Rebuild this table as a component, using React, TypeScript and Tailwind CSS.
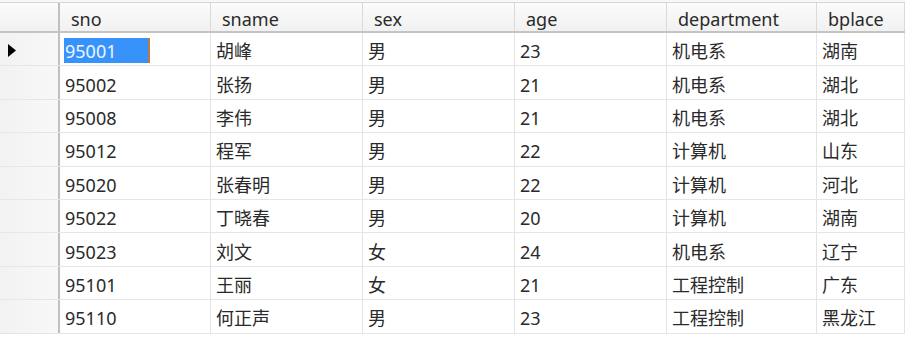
const columns = ["sno", "sname", "sex", "age", "department", "bplace"]
const widths = ["w-[151px]", "w-[152px]", "w-[152px]", "w-[152px]", "w-[150px]", "flex-1"]

const rows = [
  ["95001", "胡峰", "男", "23", "机电系", "湖南"],
  ["95002", "张扬", "男", "21", "机电系", "湖北"],
  ["95008", "李伟", "男", "21", "机电系", "湖北"],
  ["95012", "程军", "男", "22", "计算机", "山东"],
  ["95020", "张春明", "男", "22", "计算机", "河北"],
  ["95022", "丁晓春", "男", "20", "计算机", "湖南"],
  ["95023", "刘文", "女", "24", "机电系", "辽宁"],
  ["95101", "王丽", "女", "21", "工程控制", "广东"],
  ["95110", "何正声", "男", "23", "工程控制", "黑龙江"],
]

export default function App() {
  return (
    <div
      className="w-[905px] h-[338px] overflow-hidden bg-white text-[18px] text-[#2a2a2a]"
      style={{ fontFamily: '"Noto Sans", "Noto Sans CJK SC", sans-serif' }}
    >
      {/* header */}
      <div className="flex h-[33px] pt-[2px] bg-[#f7f7f7]">
        <div className="flex w-full border-t border-b-2 border-t-[#d6d6d6] border-b-[#c4c4c4] bg-gradient-to-b from-[#fbfbfb] to-[#f1f1f1]">
          <div className="w-[60px] shrink-0 border-r-2 border-[#c0c0c0]" />
          {columns.map((c, i) => (
            <div
              key={c}
              className={`${widths[i]} shrink-0 flex items-center pl-[11px] pt-[3px] border-r border-[#dadada] leading-none`}
            >
              {c}
            </div>
          ))}
        </div>
      </div>

      {/* body */}
      {rows.map((r, ri) => (
        <div key={r[0]} className="flex h-[33.4px] border-b border-[#e6e6e6]">
          <div className="w-[60px] shrink-0 flex items-center pl-[8px] pt-[2px] border-r-2 border-[#c0c0c0] bg-gradient-to-r from-[#f2f2f2] to-[#f8f8f8]">
            {ri === 0 && (
              <svg width="8" height="13" viewBox="0 0 8 13">
                <polygon points="0,0 8,6.5 0,13" fill="#000" />
              </svg>
            )}
          </div>
          {r.map((v, ci) => (
            <div
              key={ci}
              className={`${widths[ci]} shrink-0 flex items-center border-r border-[#e4e4e4] leading-none`}
            >
              {ri === 0 && ci === 0 ? (
                <span className="ml-[4px] mt-[2px] w-[86px] h-[25px] flex items-center pl-[1px] pt-[2px] bg-[#3793fa] text-[#eef5ff] border-r-2 border-[#b97a4a]">
                  {v}
                </span>
              ) : (
                <span className="pl-[5px] pt-[4px]">{v}</span>
              )}
            </div>
          ))}
        </div>
      ))}
    </div>
  )
}
